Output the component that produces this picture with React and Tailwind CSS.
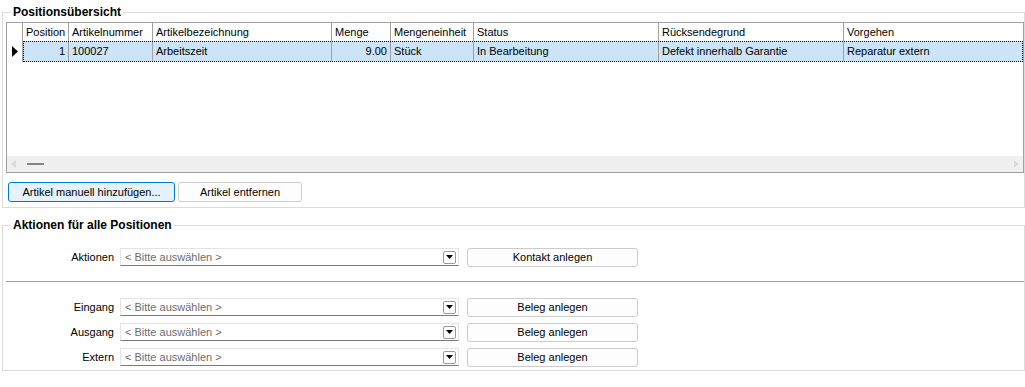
const columns = [
  { key: 'pos', title: 'Position', w: 'w-[46px]', align: 'text-right' },
  { key: 'nr', title: 'Artikelnummer', w: 'w-[84px]' },
  { key: 'bez', title: 'Artikelbezeichnung', w: 'w-[179px]' },
  { key: 'menge', title: 'Menge', w: 'w-[59px]', align: 'text-right' },
  { key: 'einheit', title: 'Mengeneinheit', w: 'w-[83px]' },
  { key: 'status', title: 'Status', w: 'w-[185px]' },
  { key: 'grund', title: 'Rücksendegrund', w: 'w-[185px]' },
  { key: 'vorgehen', title: 'Vorgehen', w: 'w-[179px]' },
];

const row = {
  pos: '1',
  nr: '100027',
  bez: 'Arbeitszeit',
  menge: '9.00',
  einheit: 'Stück',
  status: 'In Bearbeitung',
  grund: 'Defekt innerhalb Garantie',
  vorgehen: 'Reparatur extern',
};

function ComboRow({ label, button }) {
  return (
    <div className="flex items-center h-[18px]">
      <div className="w-[112px] text-right pr-[1px]">{label}</div>
      <div className="ml-[5px] w-[339px] h-[18px] flex items-center bg-white border border-[#e3e3e3] border-b-[#7a7a7a] pl-[4px] pr-[2px]">
        <span className="flex-1 text-[#6d6d6d]">&lt; Bitte auswählen &gt;</span>
        <span className="w-[13px] h-[13px] rounded-[2px] border border-[#9a9a9a] flex items-center justify-center">
          <svg width="7" height="4" viewBox="0 0 7 4"><path d="M0 0h7L3.5 4z" fill="#000" /></svg>
        </span>
      </div>
      <button className="ml-[8px] w-[171px] h-[19px] bg-[#fdfdfd] border border-[#cccccc] rounded-[3px] text-black">
        {button}
      </button>
    </div>
  );
}

export default function App() {
  return (
    <div className="w-[1025px] h-[387px] bg-white text-black text-[11px] leading-[13px] overflow-hidden pl-[2px] pt-[6px]" style={{ fontFamily: '"Liberation Sans", Arial, sans-serif' }}>
      {/* Positionsübersicht */}
      <fieldset className="w-[1023px] border border-[#dcdcdc] m-0 p-0 pb-[5px]">
        <legend className="ml-[8px] px-[2px] font-bold text-[12px] leading-[13px]">Positionsübersicht</legend>
        <div className="ml-[3px] mt-[3px] w-[1018px] h-[151px] border border-[#a0a0a0] flex flex-col">
          <div className="flex h-[18px] shrink-0">
            <div className="w-[16px] border-r border-[#a0a0a0]" />
            {columns.map((c, i) => (
              <div key={c.key} className={`${c.w} pl-[3px] flex items-center ${i < columns.length - 1 ? 'border-r border-[#a0a0a0]' : ''}`}>
                {c.title}
              </div>
            ))}
          </div>
          <div className="flex h-[21px] shrink-0">
            <div className="w-[16px] border-r border-[#a0a0a0] flex items-center justify-center">
              <svg width="6" height="11" viewBox="0 0 6 11"><path d="M0 0l6 5.5L0 11z" fill="#000" /></svg>
            </div>
            <div className="flex-1 flex border border-dotted border-black bg-[#cce4f7]">
              {columns.map((c, i) => (
                <div
                  key={c.key}
                  className={`${i === 0 ? 'w-[45px]' : i === columns.length - 1 ? 'flex-1' : c.w} px-[3px] flex items-center ${c.align === 'text-right' ? 'justify-end' : ''} ${i < columns.length - 1 ? 'border-r border-[#a0a0a0]' : ''}`}
                >
                  {row[c.key]}
                </div>
              ))}
            </div>
          </div>
          <div className="flex-1" />
          <div className="h-[16px] shrink-0 bg-[#f0f0f0] flex items-center px-[4px]">
            <svg width="5" height="8" viewBox="0 0 5 8"><path d="M5 0v8L0 4z" fill="#dadada" /></svg>
            <div className="ml-[11px] w-[17px] h-[2px] bg-[#858585]" />
            <div className="flex-1" />
            <svg width="5" height="8" viewBox="0 0 5 8"><path d="M0 0v8l5-4z" fill="#dadada" /></svg>
          </div>
        </div>
        <div className="flex ml-[5px] mt-[9px] gap-[3px]">
          <button className="w-[167px] h-[20px] bg-[#e5f1fb] border border-[#0078d7] rounded-[3px] text-black">
            Artikel manuell hinzufügen...
          </button>
          <button className="w-[124px] h-[20px] bg-[#fdfdfd] border border-[#cccccc] rounded-[3px] text-black">
            Artikel entfernen
          </button>
        </div>
      </fieldset>

      {/* Aktionen für alle Positionen */}
      <fieldset className="w-[1023px] mt-[11px] border border-[#dcdcdc] m-0 p-0 pb-[4px]">
        <legend className="ml-[8px] px-[2px] font-bold text-[12px] leading-[13px]">Aktionen für alle Positionen</legend>
        <div className="mt-[16px]">
          <ComboRow label="Aktionen" button="Kontakt anlegen" />
        </div>
        <div className="ml-[3px] mt-[15px] w-[1018px] h-0 border-t border-[#a0a0a0]" />
        <div className="mt-[16px] flex flex-col gap-[7px]">
          <ComboRow label="Eingang" button="Beleg anlegen" />
          <ComboRow label="Ausgang" button="Beleg anlegen" />
          <ComboRow label="Extern" button="Beleg anlegen" />
        </div>
      </fieldset>
    </div>
  );
}
